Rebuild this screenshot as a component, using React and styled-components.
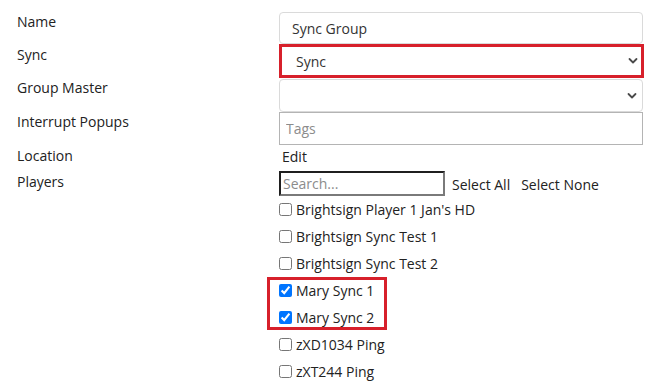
import React from 'react'
import styled, { createGlobalStyle } from 'styled-components'

const GlobalStyle = createGlobalStyle`
    body {
        margin: 0;
        background: #fff;
        font-family: "Open Sans", "Liberation Sans", sans-serif;
        font-size: 14px;
        color: #222;
    }
`

const Form = styled.div`
    display: grid;
    grid-template-columns: 262px 366px;
    align-items: start;
    padding: 12px 0 0 17px;
`

const Label = styled.div`
    line-height: 20px;
    padding-top: ${props => props.offset || 0}px;
`

const Field = styled.div`
    display: flex;
    flex-direction: column;
    margin-top: ${props => props.top || 0}px;
`

const TextInput = styled.input`
    box-sizing: border-box;
    width: 364px;
    height: ${props => props.h || 32}px;
    margin: 0;
    padding: 0 12px;
    border: 1px solid ${props => props.square ? '#b4b4b4' : '#dadada'};
    border-radius: ${props => props.square ? 0 : 4}px;
    font: inherit;
    color: #333;
    outline: none;
    padding-left: ${props => props.square ? 6 : 12}px;
    &::placeholder {
        color: #8c8c8c;
    }
`

const SelectWrap = styled.div`
    position: relative;
    width: ${props => props.highlight ? 365 : 364}px;
`

const Select = styled.select`
    box-sizing: border-box;
    width: 100%;
    height: ${props => props.highlight ? 34 : 33}px;
    margin: 0;
    padding: 0 30px 0 ${props => props.highlight ? 14 : 12}px;
    appearance: none;
    background: #fff;
    border: ${props => props.highlight ? '3px solid #d7202b' : '1px solid #dadada'};
    border-radius: ${props => props.highlight ? 0 : 4}px;
    font: inherit;
    color: #333;
    outline: none;
`

const Chevron = styled.svg`
    position: absolute;
    right: 6px;
    top: 50%;
    width: 10px;
    height: 8px;
    margin-top: -4px;
    pointer-events: none;
`

const EditLink = styled.div`
    height: 26px;
    line-height: 22px;
    padding-left: 3px;
    padding-top: 1px;
    box-sizing: border-box;
`

const SearchRow = styled.div`
    display: flex;
    align-items: center;
    gap: 7px;
    height: 25px;
`

const SearchInput = styled.input`
    box-sizing: border-box;
    width: 166px;
    height: 25px;
    margin: 0;
    padding: 0 2px;
    border: 2px solid;
    border-color: #1f1f1f #7a7a7a #7a7a7a #1f1f1f;
    font: inherit;
    color: #333;
    outline: none;
    &::placeholder {
        color: #8c8c8c;
    }
`

const Action = styled.span`
    margin-left: ${props => props.gap || 0}px;
    padding-top: 1px;
    cursor: pointer;
`

const PlayerRow = styled.label`
    display: flex;
    align-items: center;
    height: 27px;
`

const Check = styled.input`
    width: 13px;
    height: 13px;
    margin: 0 4px 1px 0;
    accent-color: #0075ff;
`

const Highlight = styled.div`
    position: relative;
    &::after {
        content: '';
        position: absolute;
        left: -12px;
        top: 0;
        width: 120px;
        height: 53px;
        box-sizing: border-box;
        border: 3px solid #d7202b;
        pointer-events: none;
    }
`

const players = [
    { name: "Brightsign Player 1 Jan's HD" },
    { name: 'Brightsign Sync Test 1' },
    { name: 'Brightsign Sync Test 2' },
    { name: 'Mary Sync 1', checked: true, marked: true },
    { name: 'Mary Sync 2', checked: true, marked: true },
    { name: 'zXD1034 Ping' },
    { name: 'zXT244 Ping' },
]

function ChevronIcon() {
    return (
        <Chevron viewBox="0 0 10 8">
            <path d="M1.5 2 L5 5.5 L8.5 2" fill="none" stroke="#4a4a4a" strokeWidth="1.8" strokeLinecap="round" strokeLinejoin="round" />
        </Chevron>
    )
}

function Dropdown({ value, highlight }) {
    return (
        <SelectWrap highlight={highlight}>
            <Select highlight={highlight} defaultValue={value}>
                <option value={value}>{value}</option>
            </Select>
            <ChevronIcon />
        </SelectWrap>
    )
}

function Player({ name, checked }) {
    return (
        <PlayerRow>
            <Check type="checkbox" defaultChecked={checked} />
            {name}
        </PlayerRow>
    )
}

export default function App() {
    const marked = players.filter(p => p.marked)
    return (
        <>
            <GlobalStyle />
            <Form>
                <Label>Name</Label>
                <Field>
                    <TextInput defaultValue="Sync Group" />
                </Field>

                <Label offset={1}>Sync</Label>
                <Field>
                    <Dropdown value="Sync" highlight />
                </Field>

                <Label>Group Master</Label>
                <Field top={1}>
                    <Dropdown value="" />
                </Field>

                <Label>Interrupt Popups</Label>
                <Field>
                    <TextInput square h={33} placeholder="Tags" />
                </Field>

                <Label offset={1}>Location</Label>
                <Field>
                    <EditLink>Edit</EditLink>
                </Field>

                <Label offset={1}>Players</Label>
                <Field>
                    <SearchRow>
                        <SearchInput placeholder="Search..." />
                        <Action>Select All</Action>
                        <Action gap={4}>Select None</Action>
                    </SearchRow>
                    {players.slice(0, 3).map(p => <Player key={p.name} {...p} />)}
                    <Highlight>
                        {marked.map(p => <Player key={p.name} {...p} />)}
                    </Highlight>
                    {players.slice(5).map(p => <Player key={p.name} {...p} />)}
                </Field>
            </Form>
        </>
    )
}
